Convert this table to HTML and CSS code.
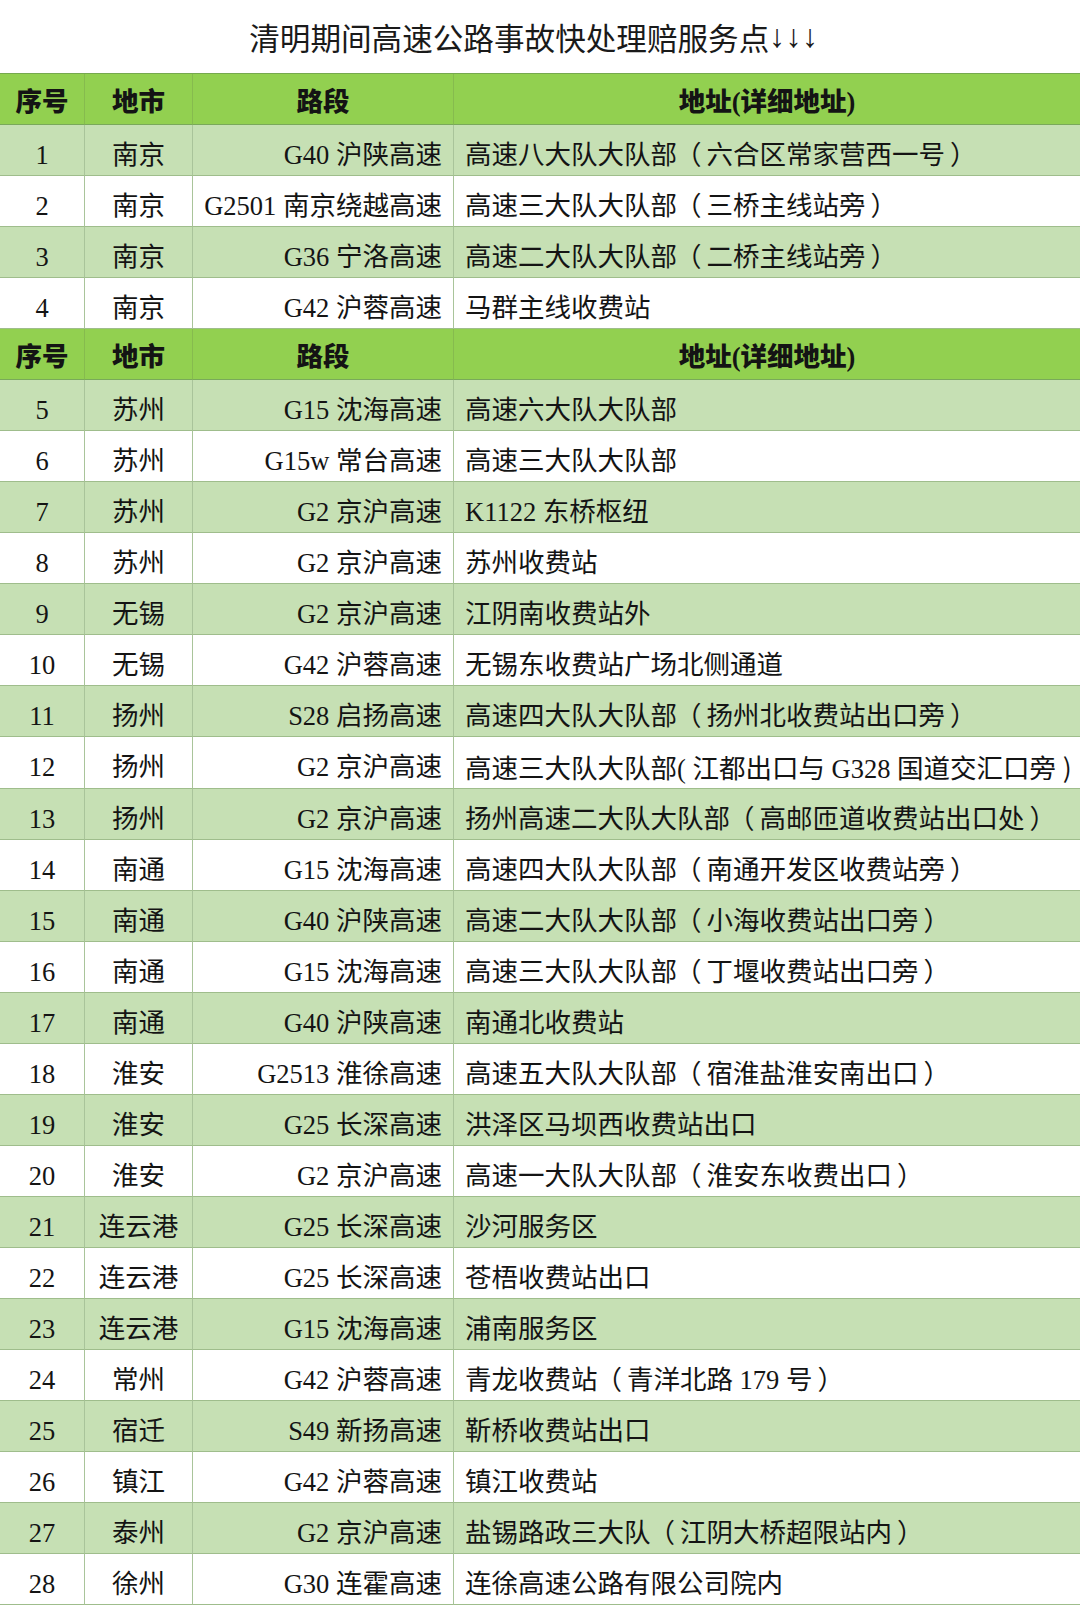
FILE: index.html
```html
<!DOCTYPE html>
<html lang="zh-CN">
<head>
<meta charset="utf-8">
<title>清明期间高速公路事故快处理赔服务点</title>
<link rel="stylesheet" href="styles.css">
</head>
<body>
<h1 class="title">清明期间高速公路事故快处理赔服务点<span class="arrows">↓↓↓</span></h1>
<table class="sheet">
<colgroup><col class="c-no"><col class="c-city"><col class="c-road"><col class="c-addr"></colgroup>
<tbody>
<tr class="head"><td>序号</td><td>地市</td><td>路段</td><td>地址(详细地址)</td></tr>
<tr class="band"><td>1</td><td>南京</td><td>G40 沪陕高速</td><td>高速八大队大队部<span class="lp">（</span>六合区常家营西一号<span class="rp">）</span></td></tr>
<tr><td>2</td><td>南京</td><td>G2501 南京绕越高速</td><td>高速三大队大队部<span class="lp">（</span>三桥主线站旁<span class="rp">）</span></td></tr>
<tr class="band"><td>3</td><td>南京</td><td>G36 宁洛高速</td><td>高速二大队大队部<span class="lp">（</span>二桥主线站旁<span class="rp">）</span></td></tr>
<tr><td>4</td><td>南京</td><td>G42 沪蓉高速</td><td>马群主线收费站</td></tr>
<tr class="head"><td>序号</td><td>地市</td><td>路段</td><td>地址(详细地址)</td></tr>
<tr class="band"><td>5</td><td>苏州</td><td>G15 沈海高速</td><td>高速六大队大队部</td></tr>
<tr><td>6</td><td>苏州</td><td>G15w 常台高速</td><td>高速三大队大队部</td></tr>
<tr class="band"><td>7</td><td>苏州</td><td>G2 京沪高速</td><td>K1122 东桥枢纽</td></tr>
<tr><td>8</td><td>苏州</td><td>G2 京沪高速</td><td>苏州收费站</td></tr>
<tr class="band"><td>9</td><td>无锡</td><td>G2 京沪高速</td><td>江阴南收费站外</td></tr>
<tr><td>10</td><td>无锡</td><td>G42 沪蓉高速</td><td>无锡东收费站广场北侧通道</td></tr>
<tr class="band"><td>11</td><td>扬州</td><td>S28 启扬高速</td><td>高速四大队大队部<span class="lp">（</span>扬州北收费站出口旁<span class="rp">）</span></td></tr>
<tr><td>12</td><td>扬州</td><td>G2 京沪高速</td><td class="long">高速三大队大队部( 江都出口与 G328 国道交汇口旁 <span class="rp-half">)</span></td></tr>
<tr class="band"><td>13</td><td>扬州</td><td>G2 京沪高速</td><td>扬州高速二大队大队部<span class="lp">（</span>高邮匝道收费站出口处<span class="rp">）</span></td></tr>
<tr><td>14</td><td>南通</td><td>G15 沈海高速</td><td>高速四大队大队部<span class="lp">（</span>南通开发区收费站旁<span class="rp">）</span></td></tr>
<tr class="band"><td>15</td><td>南通</td><td>G40 沪陕高速</td><td>高速二大队大队部<span class="lp">（</span>小海收费站出口旁<span class="rp">）</span></td></tr>
<tr><td>16</td><td>南通</td><td>G15 沈海高速</td><td>高速三大队大队部<span class="lp">（</span>丁堰收费站出口旁<span class="rp">）</span></td></tr>
<tr class="band"><td>17</td><td>南通</td><td>G40 沪陕高速</td><td>南通北收费站</td></tr>
<tr><td>18</td><td>淮安</td><td>G2513 淮徐高速</td><td>高速五大队大队部<span class="lp">（</span>宿淮盐淮安南出口<span class="rp">）</span></td></tr>
<tr class="band"><td>19</td><td>淮安</td><td>G25 长深高速</td><td>洪泽区马坝西收费站出口</td></tr>
<tr><td>20</td><td>淮安</td><td>G2 京沪高速</td><td>高速一大队大队部<span class="lp">（</span>淮安东收费出口<span class="rp">）</span></td></tr>
<tr class="band"><td>21</td><td>连云港</td><td>G25 长深高速</td><td>沙河服务区</td></tr>
<tr><td>22</td><td>连云港</td><td>G25 长深高速</td><td>苍梧收费站出口</td></tr>
<tr class="band"><td>23</td><td>连云港</td><td>G15 沈海高速</td><td>浦南服务区</td></tr>
<tr><td>24</td><td>常州</td><td>G42 沪蓉高速</td><td>青龙收费站<span class="lp">（</span>青洋北路 179 号<span class="rp">）</span></td></tr>
<tr class="band"><td>25</td><td>宿迁</td><td>S49 新扬高速</td><td>靳桥收费站出口</td></tr>
<tr><td>26</td><td>镇江</td><td>G42 沪蓉高速</td><td>镇江收费站</td></tr>
<tr class="band"><td>27</td><td>泰州</td><td>G2 京沪高速</td><td>盐锡路政三大队<span class="lp">（</span>江阴大桥超限站内<span class="rp">）</span></td></tr>
<tr><td>28</td><td>徐州</td><td>G30 连霍高速</td><td>连徐高速公路有限公司院内</td></tr>
</tbody>
</table>
</body>
</html>
```
FILE: styles.css
```css
html, body {
  margin: 0;
  padding: 0;
  background: #ffffff;
}
body {
  width: 1080px;
  font-family: "Liberation Serif", "Noto Sans CJK SC", serif;
  color: #141414;
}
.title {
  margin: 0;
  height: 73px;
  display: flex;
  align-items: center;
  justify-content: center;
  padding-right: 12px;
  box-sizing: border-box;
  font-family: "Noto Sans CJK SC", sans-serif;
  font-weight: 400;
  font-size: 30.6px;
  color: #1a1a1a;
}
.arrows {
  font-family: "Liberation Sans", "DejaVu Sans", sans-serif;
  font-size: 32px;
  letter-spacing: 0.5px;
}
.sheet {
  width: 1080px;
  table-layout: fixed;
  border-collapse: separate;
  border-spacing: 0;
  border-top: 1px solid #76a94e;
}
.c-no { width: 85px; }
.c-city { width: 108px; }
.c-road { width: 261px; }
.c-addr { width: 626px; }
.sheet td {
  box-sizing: border-box;
  height: 51px;
  padding: 11px 0 0;
  line-height: 38px;
  font-size: 26.5px;
  vertical-align: top;
  white-space: nowrap;
  overflow: visible;
  border-bottom: 1px solid #9fbd8c;
  border-right: 1px solid #a9c49a;
  text-align: center;
}
.sheet td:last-child {
  border-right: none;
  text-align: left;
  padding-left: 11px;
}
.sheet td:nth-child(3) {
  text-align: right;
  padding-right: 11px;
}
.sheet tr.band td {
  background: #c6e0b4;
}
.sheet tr.head td {
  background: #92d050;
  font-weight: 900;
  text-align: center;
  padding-left: 0;
  padding-right: 0;
  padding-top: 9px;
  border-bottom-color: #79a95a;
  border-right-color: #86bb4e;
}
.sheet tr.head td:last-child {
  padding-left: 0;
}
.sheet td.long {
  letter-spacing: 0;
}
.lp {
  margin-left: -2px;
  margin-right: 5px;
}
.rp {
  margin-left: 5px;
}
.rp-half {
  font-family: "Noto Sans CJK SC", sans-serif;
}
```
